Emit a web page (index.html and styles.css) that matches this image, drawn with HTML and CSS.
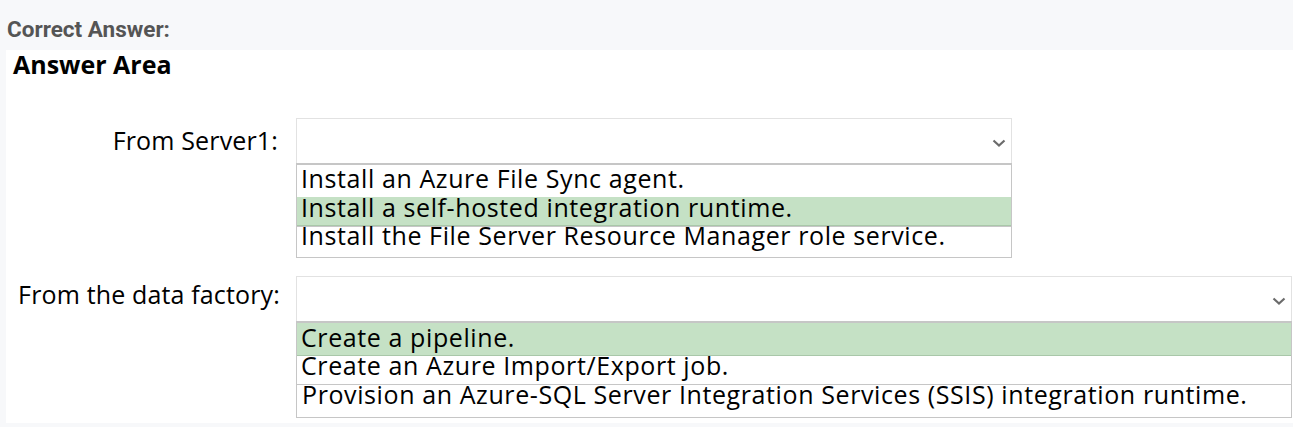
FILE: index.html
```html
<!DOCTYPE html>
<html lang="en">
<head>
<meta charset="utf-8">
<title>Correct Answer</title>
<link rel="stylesheet" href="styles.css">
</head>
<body>
<div class="header"><span class="header-title">Correct Answer:</span></div>
<div class="panel">
  <div class="area-title">Answer Area</div>
  <div class="question q1">
    <div class="label">From Server1:</div>
    <div class="dropdown">
      <div class="select">
        <svg class="chev" width="14" height="8" viewBox="0 0 14 8"><path d="M1.5 1.5 L7 6.5 L12.5 1.5" fill="none" stroke="#6b6b6b" stroke-width="2.2"/></svg>
      </div>
      <div class="options list1">
        <div class="opt r1">Install an Azure File Sync agent.</div>
        <div class="opt sel r2">Install a self-hosted integration runtime.</div>
        <div class="opt sep r3">Install the File Server Resource Manager role service.</div>
      </div>
    </div>
  </div>
  <div class="question q2">
    <div class="label">From the data factory:</div>
    <div class="dropdown wide">
      <div class="select">
        <svg class="chev" width="14" height="8" viewBox="0 0 14 8"><path d="M1.5 1.5 L7 6.5 L12.5 1.5" fill="none" stroke="#6b6b6b" stroke-width="2.2"/></svg>
      </div>
      <div class="options list2">
        <div class="opt sel r1">Create a pipeline.</div>
        <div class="opt r2">Create an Azure Import/Export job.</div>
        <div class="opt sep r3">Provision an Azure-SQL Server Integration Services (SSIS) integration runtime.</div>
      </div>
    </div>
  </div>
</div>
</body>
</html>
```
FILE: styles.css
```css
html, body {
  margin: 0;
  padding: 0;
}
body {
  background: #f7f8fa;
  width: 1293px;
  height: 427px;
  overflow: hidden;
  font-family: "Open Sans", "Noto Sans", sans-serif;
  color: #000;
}
.header {
  height: 50px;
  padding-left: 7px;
  box-sizing: border-box;
  padding-top: 16px;
}
.header-title {
  display: inline-block;
  font-family: Roboto, "Liberation Sans", sans-serif;
  font-weight: 700;
  font-size: 22.5px;
  line-height: 26px;
  color: #555;
}
.panel {
  margin-left: 6px;
  background: #fff;
  height: 373px;
  box-sizing: border-box;
  padding-top: 1px;
}
.area-title {
  font-weight: 700;
  font-size: 25px;
  line-height: 26px;
  margin-left: 7px;
}
.question {
  display: flex;
  align-items: flex-start;
}
.q1 { margin-top: 41px; }
.q2 { margin-top: 18px; }
.label {
  flex: none;
  width: 290px;
  height: 45px;
  padding-right: 18px;
  box-sizing: border-box;
  text-align: right;
  font-size: 25px;
  letter-spacing: 0.15px;
  line-height: 45px;
  white-space: nowrap;
}
.q2 .label {
  line-height: 37px;
  padding-right: 16px;
}
.dropdown {
  width: 716px;
}
.dropdown.wide {
  width: 996px;
}
.select {
  height: 45px;
  border: 1px solid #e2e2e2;
  border-bottom: none;
  box-sizing: border-box;
  display: flex;
  align-items: center;
  justify-content: flex-end;
  padding-right: 5px;
  padding-top: 3px;
}
.options {
  border: 1px solid #c6c6c6;
  border-top: 2px solid #c6c6c6;
  font-size: 25px;
  letter-spacing: 0.6px;
}
.opt {
  padding-left: 4px;
  white-space: nowrap;
}
.opt.sel {
  background: #c5e1c5;
  border-bottom: 1px solid #a9c7a9;
}
.opt.sep {
  border-top: 1px solid #c6c6c6;
}
.list1 .r1 { height: 32px; line-height: 27px; }
.list1 .r2 { height: 28px; line-height: 21px; }
.list1 .r3 { height: 30px; line-height: 17px; }
.list2 .r1 { height: 32px; line-height: 29px; }
.list2 .r2 { height: 28px; line-height: 19px; }
.list2 .r3 { height: 32px; line-height: 19px; padding-left: 5px; }
```
